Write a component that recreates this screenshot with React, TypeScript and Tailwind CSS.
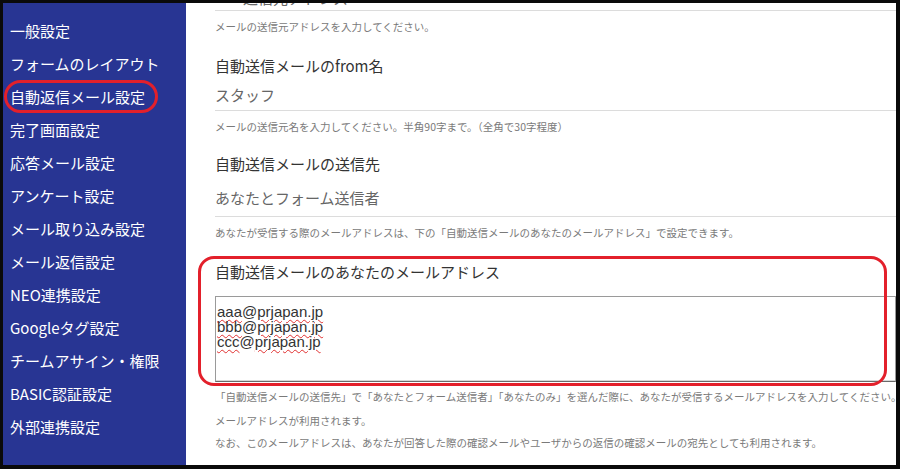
const menu = [
  '一般設定',
  'フォームのレイアウト',
  '自動返信メール設定',
  '完了画面設定',
  '応答メール設定',
  'アンケート設定',
  'メール取り込み設定',
  'メール返信設定',
  'NEO連携設定',
  'Googleタグ設定',
  'チームアサイン・権限',
  'BASIC認証設定',
  '外部連携設定',
];

const jp = { fontFamily: '"Noto Sans CJK JP", "Noto Sans", sans-serif' };

function Helper({ children, className = '' }: { children: React.ReactNode; className?: string }) {
  return (
    <p className={`h-[14px] text-[10.5px] leading-[14px] text-[#7a7a7a] whitespace-nowrap ${className}`}>
      {children}
    </p>
  );
}

function Email({ name, domain }: { name: string; domain: string }) {
  return (
    <div className="h-[15px]">
      <span className="underline decoration-wavy decoration-[#e03030] decoration-1 underline-offset-[2px]">{name}</span>
      @
      <span className="underline decoration-wavy decoration-[#e03030] decoration-1 underline-offset-[2px]">{domain}</span>
    </div>
  );
}

export default function App() {
  return (
    <div className="w-[900px] h-[469px] bg-[#0a0a0a] pt-[3px] pl-[3px] pr-[4px] pb-[4px] overflow-hidden" style={jp}>
      <div className="flex h-full">
        {/* Sidebar */}
        <aside className="relative w-[183px] shrink-0 bg-[#283593] pt-[12px] pl-[7px]">
          {menu.map((m) => (
            <div key={m} className="h-[33px] flex items-center text-[15px] text-white whitespace-nowrap">
              {m}
            </div>
          ))}
          <div className="absolute left-[1px] top-[77px] w-[154px] h-[33px] rounded-full border-[3px] border-[#e3202b]" />
        </aside>

        {/* Main */}
        <main className="relative flex-1 bg-white overflow-hidden pl-[29px]">
          <div className="h-[8px] border-b border-[#dcdcdc] overflow-hidden flex items-end">
            <span className="text-[15px] leading-[17px] text-[#666] pl-[28px] mb-[4px]">送信元アドレス</span>
          </div>
          <Helper className="mt-[9px]">メールの送信元アドレスを入力してください。</Helper>

          <div className="mt-[22px] h-[20px] text-[15px] leading-[20px] text-[#333]">自動送信メールのfrom名</div>
          <div className="mt-[9px] h-[20px] text-[15px] leading-[20px] text-[#666]">スタッフ</div>
          <div className="mt-[5px] h-px bg-[#dcdcdc]" />
          <Helper className="mt-[9px]">メールの送信元名を入力してください。半角90字まで。（全角で30字程度）</Helper>

          <div className="mt-[20px] h-[20px] text-[15px] leading-[20px] text-[#333]">自動送信メールの送信先</div>
          <div className="mt-[14px] h-[20px] text-[15px] leading-[20px] text-[#666]">あなたとフォーム送信者</div>
          <div className="mt-[8px] h-px bg-[#dcdcdc]" />
          <Helper className="mt-[9px]">
            あなたが受信する際のメールアドレスは、下の「自動送信メールのあなたのメールアドレス」で設定できます。
          </Helper>

          <div className="mt-[22px] h-[20px] text-[15px] leading-[20px] text-[#333]">自動送信メールのあなたのメールアドレス</div>
          <div
            className="mt-[14px] h-[86px] border border-[#9a9a9a] border-b-[#6a6a6a] shadow-[inset_0_-1px_0_#d8d8d8] pt-[7px] pl-px text-[15px] leading-[15px] text-[#333]"
            style={{ fontFamily: '"Liberation Sans", Arial, sans-serif' }}
          >
            <Email name="aaa" domain="prjapan.jp" />
            <Email name="bbb" domain="prjapan.jp" />
            <Email name="ccc" domain="prjapan.jp" />
          </div>

          <Helper className="mt-[8px]">
            「自動送信メールの送信先」で「あなたとフォーム送信者」「あなたのみ」を選んだ際に、あなたが受信するメールアドレスを入力してください。
          </Helper>
          <Helper className="mt-[10px]">メールアドレスが利用されます。</Helper>
          <Helper className="mt-[8px]">
            なお、このメールアドレスは、あなたが回答した際の確認メールやユーザからの返信の確認メールの宛先としても利用されます。
          </Helper>

          {/* highlight annotation */}
          <div className="absolute left-[12px] top-[253px] w-[689px] h-[130px] rounded-[16px] border-[3px] border-[#e3202b]" />
        </main>
      </div>
    </div>
  );
}
